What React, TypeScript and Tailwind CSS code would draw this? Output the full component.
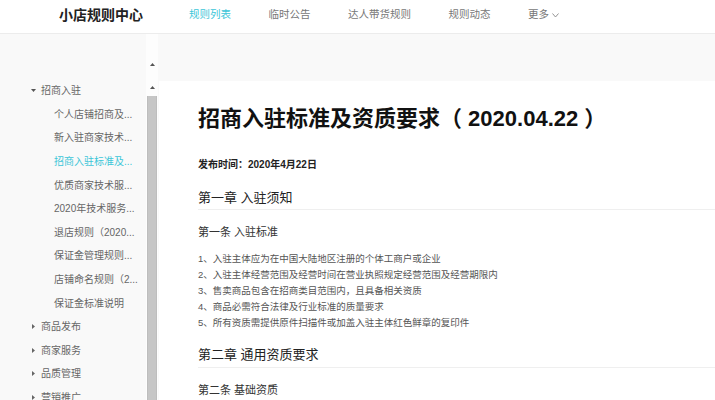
import React from "react";

const NAV = ["规则列表", "临时公告", "达人带货规则", "规则动态"];

const SUB = [
  "个人店铺招商及...",
  "新入驻商家技术...",
  "招商入驻标准及...",
  "优质商家技术服...",
  "2020年技术服务...",
  "退店规则（2020...",
  "保证金管理规则...",
  "店铺命名规则（2...",
  "保证金标准说明",
];

const GROUPS = ["商品发布", "商家服务", "品质管理", "营销推广"];

const LIST = [
  "1、入驻主体应为在中国大陆地区注册的个体工商户或企业",
  "2、入驻主体经营范围及经营时间在营业执照规定经营范围及经营期限内",
  "3、售卖商品包含在招商类目范围内，且具备相关资质",
  "4、商品必需符合法律及行业标准的质量要求",
  "5、所有资质需提供原件扫描件或加盖入驻主体红色鲜章的复印件",
];

function Caret({ open }: { open?: boolean }) {
  return (
    <svg width="5" height="5" viewBox="0 0 5 5" className="mr-[5px] shrink-0">
      {open ? <polygon points="0,1 5,1 2.5,4" fill="#555" /> : <polygon points="1,0 4,2.5 1,5" fill="#666" />}
    </svg>
  );
}

function UpArrow() {
  return (
    <svg width="5" height="3" viewBox="0 0 5 3">
      <polygon points="0,3 2.5,0 5,3" fill="#555" />
    </svg>
  );
}

export default function App() {
  const font = { fontFamily: '"Liberation Sans", "Noto Sans CJK SC", sans-serif' };
  return (
    <div className="flex h-[400px] w-[715px] flex-col overflow-hidden bg-[#f9f9f9]" style={font}>
      <header className="flex h-[34px] shrink-0 items-center border-b border-[#ececec] bg-white pl-[59px] pb-[3px]">
        <div className="text-[14px] font-bold text-[#222]">小店规则中心</div>
        <nav className="ml-[46px] flex items-center gap-[37.5px] text-[10.5px] text-[#777]">
          {NAV.map((n, i) => (
            <span key={n} className={i === 0 ? "text-[#3cc6d8]" : ""}>
              {n}
            </span>
          ))}
          <span className="flex items-center">
            更多
            <svg width="7" height="5" viewBox="0 0 7 5" className="ml-[3px]">
              <polyline points="0.5,0.5 3.5,4 6.5,0.5" fill="none" stroke="#888" strokeWidth="0.9" />
            </svg>
          </span>
        </nav>
      </header>

      <div className="flex min-h-0 flex-1">
        <aside className="w-[146px] shrink-0 pt-[45px] text-[10px] text-[#666]">
          <div className="flex h-[23.6px] items-center pl-[31px]">
            <Caret open />
            <span>招商入驻</span>
          </div>
          {SUB.map((s, i) => (
            <div key={s} className="flex h-[23.6px] items-center pl-[54px]">
              <span className={`whitespace-nowrap ${i === 2 ? "text-[#3cc6d8]" : ""}`}>{s}</span>
            </div>
          ))}
          {GROUPS.map((g) => (
            <div key={g} className="flex h-[23.6px] items-center pl-[31px]">
              <Caret />
              <span>{g}</span>
            </div>
          ))}
        </aside>

        <div className="flex w-[12px] shrink-0 flex-col items-center bg-[#fdfdfd] pt-[29px]">
          <UpArrow />
          <div className="mt-[20px]">
            <UpArrow />
          </div>
          <div className="mt-[7px] w-[10px] flex-1 border-x border-[#bdbdbd] bg-[#c6c6c6]" />
        </div>

        <main className="flex min-w-0 flex-1 flex-col pt-[47px] pl-[1px]">
          <section className="flex-1 overflow-hidden bg-white pl-[39px] pt-[25px]">
            <h1 className="whitespace-nowrap text-[22px] leading-[26px] font-bold text-[#111]">
              招商入驻标准及资质要求（ 2020.04.22 ）
            </h1>
            <p className="mt-[26px] text-[10px] leading-[14px] font-bold text-[#222]">发布时间：2020年4月22日</p>
            <h2 className="mt-[17px] border-b border-[#efefef] pb-[2px] text-[13px] leading-[18px] text-[#222]">
              第一章 入驻须知
            </h2>
            <h3 className="mt-[14px] text-[11px] leading-[16px] text-[#333]">第一条 入驻标准</h3>
            <ul className="mt-[11px] text-[9.5px] leading-[16px] text-[#555]">
              {LIST.map((l) => (
                <li key={l} className="whitespace-nowrap">
                  {l}
                </li>
              ))}
            </ul>
            <h2 className="mt-[15px] border-b border-[#efefef] pb-[3px] text-[13px] leading-[18px] text-[#222]">
              第二章 通用资质要求
            </h2>
            <h3 className="mt-[14px] text-[11px] leading-[16px] text-[#333]">第二条 基础资质</h3>
          </section>
        </main>
      </div>
    </div>
  );
}
